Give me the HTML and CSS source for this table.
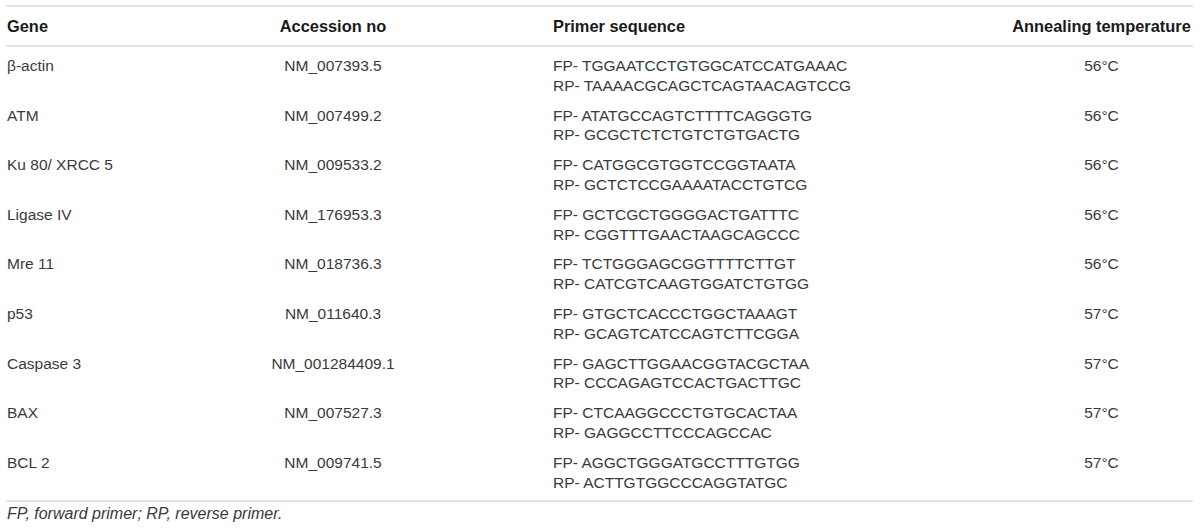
FILE: index.html
```html
<!DOCTYPE html>
<html>
<head>
<meta charset="utf-8">
<link rel="stylesheet" href="styles.css">
</head>
<body>
<div class="wrap">
<table class="primers">
  <colgroup>
    <col class="c-gene"><col class="c-acc"><col class="c-seq"><col class="c-temp">
  </colgroup>
  <thead>
    <tr>
      <th class="gene">Gene</th>
      <th class="acc">Accession no</th>
      <th class="seq">Primer sequence</th>
      <th class="temp">Annealing temperature</th>
    </tr>
  </thead>
  <tbody>
    <tr>
      <td class="gene">β-actin</td>
      <td class="acc">NM_007393.5</td>
      <td class="seq"><span class="ln">FP- TGGAATCCTGTGGCATCCATGAAAC</span><span class="ln">RP- TAAAACGCAGCTCAGTAACAGTCCG</span></td>
      <td class="temp">56°C</td>
    </tr>
    <tr>
      <td class="gene">ATM</td>
      <td class="acc">NM_007499.2</td>
      <td class="seq"><span class="ln">FP- ATATGCCAGTCTTTTCAGGGTG</span><span class="ln">RP- GCGCTCTCTGTCTGTGACTG</span></td>
      <td class="temp">56°C</td>
    </tr>
    <tr>
      <td class="gene">Ku 80/ XRCC 5</td>
      <td class="acc">NM_009533.2</td>
      <td class="seq"><span class="ln">FP- CATGGCGTGGTCCGGTAATA</span><span class="ln">RP- GCTCTCCGAAAATACCTGTCG</span></td>
      <td class="temp">56°C</td>
    </tr>
    <tr>
      <td class="gene">Ligase IV</td>
      <td class="acc">NM_176953.3</td>
      <td class="seq"><span class="ln">FP- GCTCGCTGGGGACTGATTTC</span><span class="ln">RP- CGGTTTGAACTAAGCAGCCC</span></td>
      <td class="temp">56°C</td>
    </tr>
    <tr>
      <td class="gene">Mre 11</td>
      <td class="acc">NM_018736.3</td>
      <td class="seq"><span class="ln">FP- TCTGGGAGCGGTTTTCTTGT</span><span class="ln">RP- CATCGTCAAGTGGATCTGTGG</span></td>
      <td class="temp">56°C</td>
    </tr>
    <tr>
      <td class="gene">p53</td>
      <td class="acc">NM_011640.3</td>
      <td class="seq"><span class="ln">FP- GTGCTCACCCTGGCTAAAGT</span><span class="ln">RP- GCAGTCATCCAGTCTTCGGA</span></td>
      <td class="temp">57°C</td>
    </tr>
    <tr>
      <td class="gene">Caspase 3</td>
      <td class="acc">NM_001284409.1</td>
      <td class="seq"><span class="ln">FP- GAGCTTGGAACGGTACGCTAA</span><span class="ln">RP- CCCAGAGTCCACTGACTTGC</span></td>
      <td class="temp">57°C</td>
    </tr>
    <tr>
      <td class="gene">BAX</td>
      <td class="acc">NM_007527.3</td>
      <td class="seq"><span class="ln">FP- CTCAAGGCCCTGTGCACTAA</span><span class="ln">RP- GAGGCCTTCCCAGCCAC</span></td>
      <td class="temp">57°C</td>
    </tr>
    <tr>
      <td class="gene">BCL 2</td>
      <td class="acc">NM_009741.5</td>
      <td class="seq"><span class="ln">FP- AGGCTGGGATGCCTTTGTGG</span><span class="ln">RP- ACTTGTGGCCCAGGTATGC</span></td>
      <td class="temp">57°C</td>
    </tr>
  </tbody>
</table>
<p class="note">FP, forward primer; RP, reverse primer.</p>
</div>
</body>
</html>
```
FILE: styles.css
```css
html, body {
  margin: 0;
  padding: 0;
  background: #ffffff;
}
body {
  font-family: "Liberation Sans", Arial, sans-serif;
  color: #3a3a3a;
}
.wrap {
  padding: 5px 7px 0 6px;
}
.primers {
  width: 1187px;
  border-collapse: collapse;
  table-layout: fixed;
}
.c-gene { width: 107px; }
.c-acc { width: 440px; }
.c-seq { width: 457px; }
.c-temp { width: 183px; }

.primers thead th {
  font-size: 16.4px;
  font-weight: bold;
  color: #1a1a1a;
  height: 38px;
  padding: 0;
  line-height: 20px;
  border-top: 2px solid #e2e2e2;
  border-bottom: 2px solid #e2e2e2;
  vertical-align: middle;
}
.primers td {
  font-size: 15.5px;
  line-height: 19.8px;
  padding: 5px 0;
  vertical-align: top;
}
.primers tbody tr:first-child td {
  padding-top: 9px;
}
.primers tbody tr:last-child td {
  padding-bottom: 8px;
  border-bottom: 2px solid #e2e2e2;
}
.gene { text-align: left; padding-left: 1px !important; }
.acc { text-align: center; }
.seq { text-align: left; }
.temp { text-align: center; }
.ln { display: block; white-space: nowrap; }

.note {
  margin: 2px 0 0 1px;
  font-size: 16px;
  font-style: italic;
  line-height: 20px;
  color: #3a3a3a;
}
```
